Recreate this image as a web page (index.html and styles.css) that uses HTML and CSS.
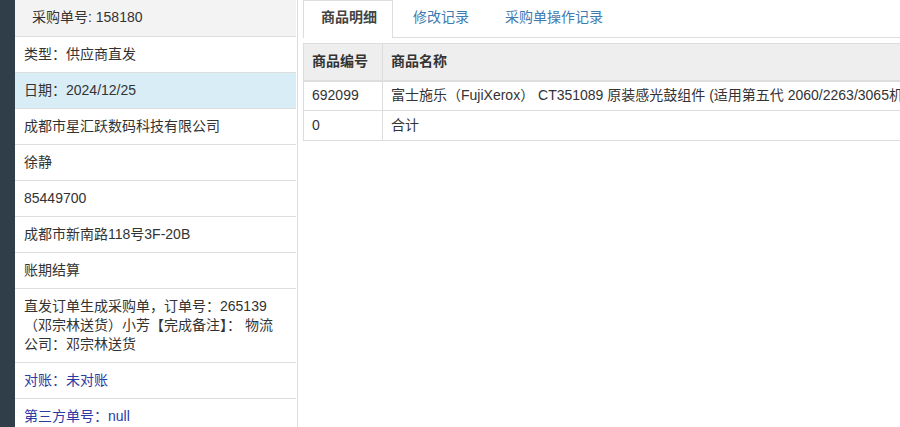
FILE: index.html
```html
<!DOCTYPE html>
<html lang="zh">
<head>
<meta charset="utf-8">
<link rel="stylesheet" href="styles.css">
</head>
<body>
<div class="page">
  <div class="sidebar"></div>
  <div class="panel">
    <ul class="info">
      <li class="title">采购单号: 158180</li>
      <li>类型：供应商直发</li>
      <li class="active">日期：2024/12/25</li>
      <li>成都市星汇跃数码科技有限公司</li>
      <li>徐静</li>
      <li>85449700</li>
      <li>成都市新南路118号3F-20B</li>
      <li>账期结算</li>
      <li class="remark">直发订单生成采购单，订单号：265139（邓宗林送货）小芳【完成备注】： 物流公司：邓宗林送货</li>
      <li class="blue">对账：未对账</li>
      <li class="blue">第三方单号：null</li>
    </ul>
  </div>
  <div class="main">
    <ul class="tabs">
      <li class="tab current">商品明细</li>
      <li class="tab">修改记录</li>
      <li class="tab">采购单操作记录</li>
    </ul>
    <table class="grid">
      <thead>
        <tr><th class="c1">商品编号</th><th>商品名称</th></tr>
      </thead>
      <tbody>
        <tr><td class="c1">692099</td><td>富士施乐（FujiXerox） CT351089 原装感光鼓组件 (适用第五代 2060/2263/3065机型)</td></tr>
        <tr><td class="c1">0</td><td>合计</td></tr>
      </tbody>
    </table>
  </div>
</div>
</body>
</html>
```

FILE: styles.css
```css
* { box-sizing: border-box; }
html, body {
  margin: 0;
  padding: 0;
  background: #fff;
  overflow: hidden;
}
body {
  font-family: "Liberation Sans", "Noto Sans CJK SC", sans-serif;
  font-size: 14px;
  color: #333;
  width: 900px;
  height: 427px;
}
.page {
  display: flex;
  height: 427px;
}
.sidebar {
  width: 15px;
  flex: none;
  background: #2f3e48;
}
.panel {
  width: 283px;
  flex: none;
  border-right: 1px solid #ddd;
}
.info {
  list-style: none;
  margin: 0;
  padding: 0;
  width: 281px;
}
.info li {
  padding: 8px 9px;
  line-height: 19px;
  border-bottom: 1px solid #ddd;
}
.info li.title {
  background: #f3f3f3;
  padding: 8px 17px 9px;
}
.info li.active {
  background: #d9edf7;
}
.info li.remark {
  padding-right: 15px;
}
.info li.blue {
  color: #2b3aa5;
}
.main {
  flex: 1;
  min-width: 0;
  overflow: hidden;
  padding-left: 5px;
}
.tabs {
  list-style: none;
  margin: 0;
  padding: 0;
  display: flex;
  border-bottom: 1px solid #ddd;
  height: 38px;
}
.tab {
  padding: 0 15px 0 17px;
  line-height: 33px;
  margin-right: 2px;
  color: #3f7ab0;
  border: 1px solid transparent;
  border-bottom: none;
  white-space: nowrap;
}
.tab.current {
  color: #444;
  font-weight: bold;
  background: #fff;
  border-color: #ddd;
  height: 38px;
}
.grid {
  margin-top: 5px;
  border-collapse: collapse;
  white-space: nowrap;
  table-layout: fixed;
  width: 760px;
}
.grid th, .grid td {
  border: 1px solid #ddd;
  text-align: left;
  padding: 0 8px;
  line-height: 19px;
  overflow: hidden;
}
.grid th {
  background: #eee;
  font-weight: bold;
  height: 37px;
  border-bottom: 2px solid #ddd;
}
.grid td {
  height: 30px;
}
.grid .c1 {
  width: 79px;
}
```
